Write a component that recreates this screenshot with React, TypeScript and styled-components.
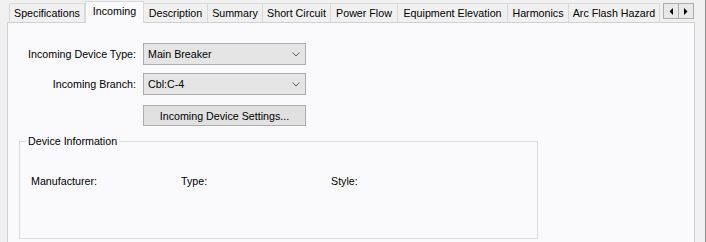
import styled, { createGlobalStyle } from 'styled-components';

const GlobalStyle = createGlobalStyle`
  html, body {
    margin: 0;
    padding: 0;
    background: #f0f0f0;
  }
  body {
    font-family: 'Liberation Sans', Arial, sans-serif;
    font-size: 10.7px;
    color: #000;
  }
`;

const TABS = [
  { label: 'Specifications', width: 76 },
  { label: 'Incoming', width: 59, active: true },
  { label: 'Description', width: 65 },
  { label: 'Summary', width: 56 },
  { label: 'Short Circuit', width: 69 },
  { label: 'Power Flow', width: 68 },
  { label: 'Equipment Elevation', width: 111 },
  { label: 'Harmonics', width: 62 },
  { label: 'Arc Flash Hazard', width: 92 },
];

const Chevron = () => (
  <svg width="8" height="5" viewBox="0 0 8 5">
    <path d="M0.5 0.5 L4 4 L7.5 0.5" fill="none" stroke="#606060" strokeWidth="1" />
  </svg>
);

const Arrow = ({ dir }: { dir: 'left' | 'right' }) => (
  <svg width="4" height="7" viewBox="0 0 4 7">
    {dir === 'left' ? <path d="M4 0 L4 7 L0.5 3.5 Z" fill="#000" /> : <path d="M0 0 L0 7 L3.5 3.5 Z" fill="#000" />}
  </svg>
);

export default function App() {
  return (
    <>
      <GlobalStyle />
      <Styled.Frame>
        <Styled.TabStrip>
          {TABS.map((t, i) => (
            <Styled.Tab key={t.label} $active={!!t.active} $first={i === 0} style={{ width: t.width }}>
              {t.label}
            </Styled.Tab>
          ))}
          <Styled.Scroller>
            <Styled.ScrollButton>
              <Arrow dir="left" />
            </Styled.ScrollButton>
            <Styled.ScrollButton>
              <Arrow dir="right" />
            </Styled.ScrollButton>
          </Styled.Scroller>
        </Styled.TabStrip>

        <Styled.Page>
          <Styled.Form>
            <Styled.Label>Incoming Device Type:</Styled.Label>
            <Styled.Combo>
              <span>Main Breaker</span>
              <Chevron />
            </Styled.Combo>
            <Styled.Label>Incoming Branch:</Styled.Label>
            <Styled.Combo>
              <span>Cbl:C-4</span>
              <Chevron />
            </Styled.Combo>
            <span />
            <Styled.Button>Incoming Device Settings...</Styled.Button>
          </Styled.Form>

          <Styled.GroupBox>
            <legend>Device Information</legend>
            <Styled.InfoRow>
              <span>Manufacturer:</span>
              <span>Type:</span>
              <span>Style:</span>
            </Styled.InfoRow>
          </Styled.GroupBox>
        </Styled.Page>
      </Styled.Frame>
    </>
  );
}

const Styled = {
  Frame: styled.div`
    box-sizing: border-box;
    width: 706px;
    height: 242px;
    display: flex;
    flex-direction: column;
    padding-left: 7px;
    padding-right: 10px;
    background: #f0f0f0;
    border-right: 1px solid #8c8c8c;
    overflow: hidden;
  `,

  TabStrip: styled.div`
    display: flex;
    align-items: flex-end;
    height: 22px;
    padding-left: 2px;
    flex-shrink: 0;
  `,

  Tab: styled.div<{ $active: boolean; $first: boolean }>`
    box-sizing: border-box;
    display: flex;
    align-items: center;
    justify-content: center;
    white-space: nowrap;
    border: 1px solid #d9d9d9;
    border-bottom: none;
    height: ${(p) => (p.$active ? '22px' : '19px')};
    margin-left: ${(p) => (p.$first || p.$active ? '0' : '-1px')};
    margin-bottom: ${(p) => (p.$active ? '-1px' : '0')};
    padding-bottom: ${(p) => (p.$active ? '3px' : '0')};
    background: ${(p) => (p.$active ? '#fafafc' : '#f0f0f0')};
    position: relative;
    z-index: ${(p) => (p.$active ? 2 : 1)};
  `,

  Scroller: styled.div`
    display: flex;
    align-self: flex-start;
    margin-top: 3px;
    margin-left: auto;
    margin-right: 1px;
  `,

  ScrollButton: styled.div`
    box-sizing: border-box;
    width: 16px;
    height: 16px;
    display: flex;
    align-items: center;
    justify-content: center;
    background: #e9e9e9;
    border: 1px solid #adadad;
    & + & {
      margin-left: -1px;
    }
  `,

  Page: styled.div`
    flex: 1;
    background: #fafafc;
    border: 1px solid #d0d0d0;
    border-bottom: none;
    padding-top: 20px;
  `,

  Form: styled.div`
    display: grid;
    grid-template-columns: 128px 163px;
    column-gap: 7px;
    row-gap: 8px;
    align-items: center;
  `,

  Label: styled.span`
    text-align: right;
    white-space: nowrap;
  `,

  Combo: styled.div`
    box-sizing: border-box;
    height: 22px;
    display: flex;
    align-items: center;
    justify-content: space-between;
    padding: 0 5px 0 4px;
    background: #e5e5e5;
    border: 1px solid #acacac;
  `,

  Button: styled.div`
    box-sizing: border-box;
    height: 21px;
    margin-top: 2px;
    display: flex;
    align-items: center;
    justify-content: center;
    background: #e1e1e1;
    border: 1px solid #adadad;
  `,

  GroupBox: styled.fieldset`
    box-sizing: border-box;
    width: 519px;
    height: 104px;
    margin: 9px 0 0 11px;
    padding: 0 0 0 6px;
    border: 1px solid #dcdcdc;

    legend {
      padding: 0 2px;
      line-height: 13px;
    }
  `,

  InfoRow: styled.div`
    display: grid;
    grid-template-columns: repeat(3, 150px);
    margin: 27px 0 0 5px;
    line-height: 13px;
  `,
};
